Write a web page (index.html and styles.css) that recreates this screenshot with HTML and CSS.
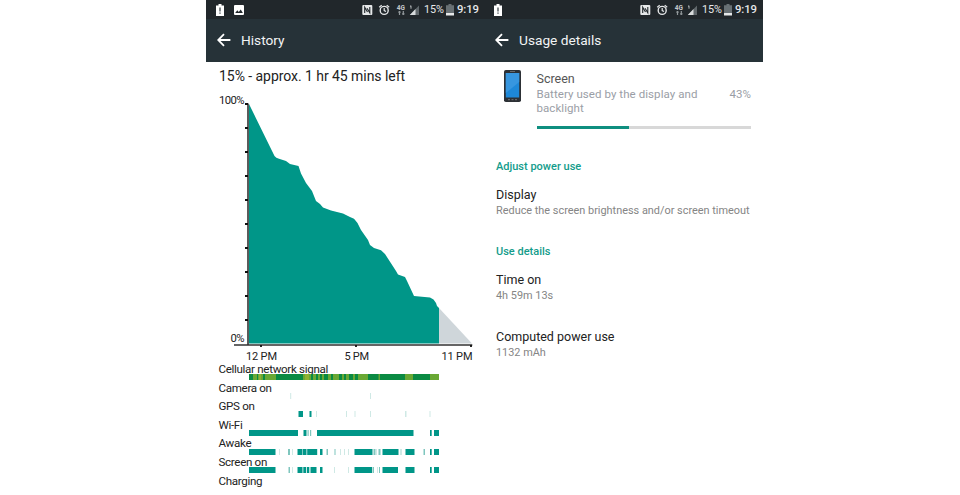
FILE: index.html
```html
<!DOCTYPE html>
<html lang="en">
<head>
    <meta charset="UTF-8">
    <meta name="viewport" content="width=device-width, initial-scale=1.0">
    <title>Battery usage</title>
    <link rel="stylesheet" href="styles.css">
</head>
<body>
    <!-- Shared status bar icons -->
    <svg class="defs" width="0" height="0">
        <symbol id="low-battery" viewBox="0 0 8 12">
            <path d="M2.5 0h3v1.5H8V12H0V1.5h2.5z" fill="#fff"/>
            <path d="M4 3.5v4M4 8.6v1.2" stroke="#333b40" stroke-width="1.2"/>
        </symbol>
        <symbol id="tray" viewBox="0 0 57 14">
            <!-- NFC -->
            <rect x="0.3" y="2" width="10" height="10" rx="1" fill="#e6e8e9"/>
            <path d="M2.7 10V4.2L5.5 9M7.8 4v5.8L5 5.2" fill="none" stroke="#21272b" stroke-width="1.1"/>
            <!-- Alarm -->
            <circle cx="22.2" cy="7.4" r="4" fill="none" stroke="#e6e8e9" stroke-width="1.4"/>
            <path d="M17.2 4.2l2.5-2.1M27.2 4.2l-2.5-2.1M22.2 5v2.6l1.8 1" fill="none" stroke="#e6e8e9" stroke-width="1.2"/>
            <!-- Data arrows -->
            <path d="M37.5 8v4M36.3 9.2h2.4M41.3 8v4M40.1 10.8h2.4" stroke="#92989b" stroke-width="1.2"/>
            <!-- Signal -->
            <path d="M57 2.5V12H47.8z" fill="#60676b"/>
            <path d="M53.5 6.1V12H47.8z" fill="#d8dbdc"/>
            <path d="M48 3.5l1-.8v3" fill="none" stroke="#c5c9cb" stroke-width="0.9"/>
        </symbol>
        <symbol id="battery" viewBox="0 0 8 12">
            <path d="M2.5 0h3v1.3H8V9H0V1.3h2.5z" fill="#687074"/>
            <path d="M0 9h8v2.5H0z" fill="#e6e8e9"/>
        </symbol>
        <symbol id="back" viewBox="0 0 14 14">
            <path d="M13.4 7H1.5M7 1.2L1.2 7 7 12.8" fill="none" stroke="#fff" stroke-width="1.8"/>
        </symbol>
    </svg>

    <div class="phones">
        <section class="phone history">
            <div class="status-bar">
                <svg class="icon-low"><use href="#low-battery"/></svg>
                <svg class="icon-image" viewBox="0 0 10 10">
                    <rect width="10" height="10" rx="1" fill="#fff"/>
                    <path d="M1.2 8l2.1-2.8 1.5 1.7 1.9-2.5L8.9 8z" fill="#21272b"/>
                </svg>
                <div class="status-right">
                    <svg class="icon-tray"><use href="#tray"/><text x="34.7" y="6.8" class="net">4G</text></svg>
                    <span class="percent">15%</span>
                    <svg class="icon-battery"><use href="#battery"/></svg>
                    <span class="clock">9:19</span>
                </div>
            </div>
            <header class="app-bar">
                <svg class="icon-back"><use href="#back"/></svg>
                <h1>History</h1>
            </header>

            <h2 class="summary">15% - approx. 1 hr 45 mins left</h2>

            <svg class="chart" viewBox="206 90 279 272">
                <path class="projected" d="M439 308L472 343.6H439z"/>
                <path class="level" d="M249 104L274.5 156Q276 158 279 158.8L286 161 290 164 298.5 166 301 173.5 306 183 312 191 316 201 320 204 323 207.5 331 210.5 343 213.5 350 217 354 218.7 357.5 223 361 230 368 240 370 245 374 248 381 250.3 385 254 396 271 398 274.5 405 277 407 281 414 296 430 297.5 433.5 299.5 436 303 437 306 439 308V343.6H249z"/>
                <path class="axis" d="M248 103.5V345M234 345H472.3"/>
                <path class="ticks" d="M245 104h3M245 128h3M245 152h3M245 176h3M245 200h3M245 224h3M245 248h3M245 272h3M245 296h3M245 320h3M261 345v2M356 345v2M471 345v2"/>
                <text x="219" y="104" textLength="25.5">100%</text>
                <text x="230.5" y="342" textLength="14">0%</text>
                <text class="hour" x="246" y="359.5" textLength="31">12 PM</text>
                <text class="hour" x="344.5" y="359.5" textLength="24.5">5 PM</text>
                <text class="hour" x="441.5" y="359.5" textLength="31">11 PM</text>
            </svg>

            <div class="timelines">
                <div class="timeline">
                    <span>Cellular network signal</span>
                    <svg viewBox="0 0 190 6">
                        <path class="good" d="M0 3H190"/>
                        <path class="fair" d="M4 3h4M9 3h5M16 3h11M54 3h8M64 3h3M69 3h2M73 3h2M79 3h3M84 3h6M93 3h2M97 3h3M104 3h2M109 3h10M129.500 3h1.500M156 3h8M181 3h9"/>
                        <path class="poor" d="M10 3h2M56 3h4"/>
                    </svg>
                </div>
                <div class="timeline">
                    <span>Camera on</span>
                    <svg viewBox="0 0 190 6"><path class="faint" d="M41.200 3h1M121 3h1"/></svg>
                </div>
                <div class="timeline">
                    <span>GPS on</span>
                    <svg viewBox="0 0 190 6">
                        <path class="on" d="M49.500 3h4.500M60.500 3h2"/>
                        <path class="faint" d="M67 3h1M97 3h1M105.500 3h1M121 3h1M156 3h1.500M180.500 3h1"/>
                    </svg>
                </div>
                <div class="timeline">
                    <span>Wi-Fi</span>
                    <svg viewBox="0 0 190 6">
                        <path class="on" d="M0 3h49M54.500 3h3M68 3h96.500M181 3h1.700M185 3h5"/>
                        <path class="half" d="M58.500 3h1.200M61 3h1.200"/>
                    </svg>
                </div>
                <div class="timeline">
                    <span>Awake</span>
                    <svg viewBox="0 0 190 6">
                        <path class="on" d="M0 3h26.500M48.500 3h5M54 3h3.500M58.200 3h10M71 3h2.500M105.500 3h18M133.500 3h16M156.500 3h9M181 3h1.700M185 3h5"/>
                        <path class="half" d="M39 3h2M77.500 3h1.500M85.500 3h1M124.500 3h2M129.500 3h2M174.500 3h1.500"/>
                        <path class="faint" d="M30 3h1M43 3h1M91 3h1M95 3h1M99 3h1M127 3h1M151 3h2"/>
                    </svg>
                </div>
                <div class="timeline">
                    <span>Screen on</span>
                    <svg viewBox="0 0 190 6">
                        <path class="on" d="M0 3h26.500M48.500 3h5M54.300 3h2.700M57.800 3h2.500M61.500 3h6M71 3h2.500M105.500 3h17.500M133.500 3h15.500M156.500 3h9M181 3h1.700M185 3h5"/>
                        <path class="half" d="M39.500 3h1.500M123.500 3h1.500M130 3h1"/>
                        <path class="faint" d="M43 3h1M85 3h1M99 3h1M128 3h1"/>
                    </svg>
                </div>
                <div class="timeline">
                    <span>Charging</span>
                </div>
            </div>
        </section>

        <section class="phone usage">
            <div class="status-bar">
                <svg class="icon-low"><use href="#low-battery"/></svg>
                <div class="status-right">
                    <svg class="icon-tray"><use href="#tray"/><text x="34.7" y="6.8" class="net">4G</text></svg>
                    <span class="percent">15%</span>
                    <svg class="icon-battery"><use href="#battery"/></svg>
                    <span class="clock">9:19</span>
                </div>
            </div>
            <header class="app-bar">
                <svg class="icon-back"><use href="#back"/></svg>
                <h1>Usage details</h1>
            </header>

            <div class="usage-head">
                <svg class="icon-phone" viewBox="0 0 17 32">
                    <rect width="17" height="32" rx="1.8" fill="#2c3035"/>
                    <rect x="1.8" y="3" width="13.4" height="24.5" fill="#1e88d8"/>
                    <path d="M15.2 3v9L1.8 23V3z" fill="#3796df"/>
                    <path d="M6 1.5h5" stroke="#777" stroke-width="0.8"/>
                    <path d="M4 29.7h2M7.5 29.7h2M11 29.7h2" stroke="#888" stroke-width="0.8"/>
                </svg>
                <div class="usage-body">
                    <h3>Screen</h3>
                    <div class="usage-text">
                        <p>Battery used by the display and<br>backlight</p>
                        <span>43%</span>
                    </div>
                    <div class="progress"><div class="progress-fill" style="width: 43%"></div></div>
                </div>
            </div>

            <h4 class="section-title">Adjust power use</h4>
            <div class="item">
                <h3>Display</h3>
                <p>Reduce the screen brightness and/or screen timeout</p>
            </div>

            <h4 class="section-title">Use details</h4>
            <div class="item">
                <h3>Time on</h3>
                <p>4h 59m 13s</p>
            </div>
            <div class="item last">
                <h3>Computed power use</h3>
                <p>1132 mAh</p>
            </div>
        </section>
    </div>
</body>
</html>
```
FILE: styles.css
```css
* {
    box-sizing: border-box;
}
body {
    margin: 0;
    background-color: #fff;
    color: #222;
    font-family: Roboto, "Liberation Sans", sans-serif;
    overflow: hidden;
}
h1, h2, h3, h4, p {
    margin: 0;
    font-weight: 400;
}
svg {
    display: block;
    flex: none;
}
.defs {
    height: 0;
}
.phones {
    display: flex;
    width: 557px;
    height: 495px;
    margin-left: 206px;
}
.phone {
    width: 279px;
}
.usage {
    width: 278px;
}

/* Status bar */
.status-bar {
    display: flex;
    align-items: center;
    height: 19px;
    padding: 0 7px 0 10px;
    background-color: #21272b;
    color: #e6e8e9;
}
.usage .status-bar {
    padding-left: 9px;
}
.icon-low {
    width: 8px;
    height: 12px;
}
.icon-image {
    width: 10px;
    height: 10px;
    margin-left: 10px;
}
.status-right {
    display: flex;
    align-items: center;
    margin-left: auto;
}
.icon-tray {
    width: 57px;
    height: 14px;
    margin-right: 5px;
}
.net {
    font-size: 6.5px;
    font-weight: 700;
    fill: #c5c9cb;
}
.percent {
    width: 22px;
    font-size: 10.8px;
    line-height: 19px;
    letter-spacing: -0.1px;
    white-space: nowrap;
}
.icon-battery {
    width: 8px;
    height: 12px;
}
.clock {
    width: 24px;
    padding-left: 3px;
    font-size: 11.3px;
    font-weight: 500;
    line-height: 19px;
    letter-spacing: -0.1px;
}

/* App bar */
.app-bar {
    display: flex;
    align-items: center;
    height: 43px;
    padding: 0 0 2px 11px;
    background-color: #263238;
    color: #f2f4f5;
}
.usage .app-bar {
    padding-left: 10px;
}
.app-bar h1 {
    margin-left: 10px;
    font-size: 13.7px;
}
.icon-back {
    width: 14px;
    height: 14px;
}

/* History */
.summary {
    height: 28px;
    padding: 5px 0 0 13px;
    font-size: 14px;
    line-height: 18px;
    letter-spacing: -0.05px;
}
.chart {
    width: 279px;
    height: 272px;
    font-size: 11.3px;
    fill: #222;
}
.hour {
    font-size: 11px;
}
.level {
    fill: #009688;
}
.projected {
    fill: #cfd6da;
}
.axis {
    fill: none;
    stroke: #333;
    stroke-width: 1.6;
}
.ticks {
    stroke: #111;
    stroke-width: 1.8;
}
.timeline {
    height: 18.6px;
    padding-left: 12.5px;
}
.timeline span {
    display: block;
    height: 12.3px;
    padding-top: 1px;
    font-size: 11.6px;
    line-height: 12.3px;
    letter-spacing: -0.32px;
}
.timeline svg {
    width: 190px;
    height: 6px;
    margin-left: 30.5px;
}
.timeline path {
    stroke-width: 6;
}
.good {
    stroke: #0b8a43;
}
.fair {
    stroke: #69a834;
}
.poor {
    stroke: #8fb032;
}
.on {
    stroke: #009688;
}
.half {
    stroke: #7fc6be;
}
.faint {
    stroke: #cfe9e5;
}

/* Usage details */
.usage-head {
    display: flex;
    height: 93px;
    padding: 8px 12px 0 19px;
}
.icon-phone {
    width: 17px;
    height: 32px;
}
.usage-body {
    flex: 1;
    margin-left: 15.5px;
}
.usage-body h3 {
    color: #555;
    font-size: 12.5px;
    line-height: 17px;
}
.usage-text {
    display: flex;
    justify-content: space-between;
    color: #9a9ea6;
    font-size: 11.5px;
    line-height: 14px;
    letter-spacing: 0.07px;
}
.progress {
    height: 3px;
    margin-top: 11px;
    background-color: #d8d8d8;
}
.progress-fill {
    height: 3px;
    background-color: #0f8f80;
}
.section-title {
    height: 24px;
    padding-left: 11px;
    color: #149c8b;
    font-size: 11px;
    font-weight: 500;
    line-height: 24px;
}
.item {
    height: 61px;
    padding: 7px 0 0 11px;
}
.item h3 {
    font-size: 12.5px;
    line-height: 17px;
}
.item p {
    margin-top: 1px;
    color: #858585;
    font-size: 10.9px;
    line-height: 14px;
    white-space: nowrap;
}
.item.last {
    margin-top: -4px;
}
```
